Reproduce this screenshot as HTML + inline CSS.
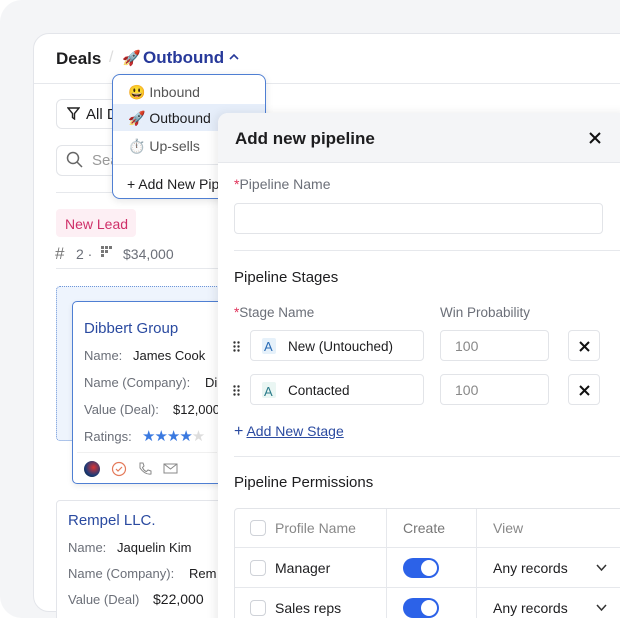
<!DOCTYPE html>
<html><head><meta charset="utf-8"><style>
*{box-sizing:border-box;margin:0;padding:0}
html,body{width:620px;height:618px;overflow:hidden}
body{background:#fff;font-family:"Liberation Sans",sans-serif;position:relative;color:#1d1d1f}
.abs{position:absolute}
.bg{left:0;top:0;width:620px;height:618px;background:#f4f5f7;border-radius:22px 0 0 22px}
.card{left:33px;top:33px;width:600px;height:579px;background:#fff;border:1px solid #e3e5ea;border-radius:16px 0 0 16px}
.t{position:absolute;white-space:nowrap;font-size:13px}
.g{color:#6b6f78}
.line{position:absolute;height:1px;background:#e6e8ec}
.box{position:absolute;border:1px solid #e2e4e8;border-radius:4px;background:#fff}
.chk{position:absolute;width:16px;height:16px;border:1px solid #cfd2d8;border-radius:4px;background:#fff}
.tog{position:absolute;width:36px;height:20px;border-radius:10px;background:#2c62e8}
.tog:after{content:"";position:absolute;right:2px;top:2px;width:16px;height:16px;border-radius:50%;background:#fff}
</style></head><body>
<div class="abs bg"></div>
<div class="abs card"></div>
<div class="t" style="left:56px;top:49px;font-size:17px;font-weight:bold">Deals</div>
<div class="t" style="left:109px;top:49px;font-size:16px;color:#ddd">/</div>
<div class="t" style="left:122px;top:49px;font-size:15px">🚀</div>
<div class="t" style="left:143px;top:48px;font-size:17px;font-weight:bold;color:#27399a">Outbound</div>
<svg class="abs" style="left:228px;top:52px" width="12" height="10"><path d="M2 7 L6 3 L10 7" fill="none" stroke="#27399a" stroke-width="1.6"/></svg>
<div class="line" style="left:34px;top:83px;width:586px"></div>
<div class="box" style="left:56px;top:99px;width:70px;height:30px;border-radius:6px"></div>
<svg class="abs" style="left:67px;top:107px" width="13" height="13"><path d="M1 1 H12 L7.5 6.5 V12 L5.5 10.5 V6.5 Z" fill="none" stroke="#222" stroke-width="1.4"/></svg>
<div class="t" style="left:86px;top:106px;font-size:15px">All D</div>
<div class="box" style="left:56px;top:145px;width:70px;height:31px;border-radius:6px"></div>
<svg class="abs" style="left:66px;top:151px" width="18" height="18"><circle cx="7" cy="7" r="5.5" fill="none" stroke="#666" stroke-width="1.5"/><path d="M11 11 L16 16" stroke="#666" stroke-width="1.5"/></svg>
<div class="t g" style="left:92px;top:152px;font-size:15px;color:#999">Sea</div>
<div class="line" style="left:56px;top:192px;width:170px"></div>
<div class="abs" style="left:56px;top:209px;width:80px;height:28px;background:#fdeff4;border-radius:4px"></div>
<div class="t" style="left:65px;top:216px;color:#cf2f68;font-size:14px">New Lead</div>
<div class="t g" style="left:55px;top:244px;font-size:17px;color:#777">#</div>
<div class="t g" style="left:76px;top:246px;font-size:14px">2 ·</div>
<svg class="abs" style="left:101px;top:246px" width="12" height="12" fill="#777"><rect x="0" y="0" width="3" height="3"/><rect x="4" y="0" width="3" height="3"/><rect x="8" y="0" width="3" height="3"/><rect x="0" y="4" width="3" height="3"/><rect x="4" y="4" width="3" height="3"/><rect x="0" y="8" width="3" height="3"/></svg>
<div class="t g" style="left:123px;top:246px;font-size:14px">$34,000</div>
<div class="line" style="left:56px;top:268px;width:170px"></div>
<div class="abs" style="left:56px;top:286px;width:170px;height:155px;background:#eef4fd;border:1px dotted #6d95d8;border-radius:4px"></div>
<div class="abs" style="left:72px;top:301px;width:160px;height:183px;background:#fff;border:1.5px solid #4f7fd3;border-radius:5px;box-shadow:0 2px 6px rgba(0,0,0,.08)"></div>
<div class="t" style="left:84px;top:320px;font-size:15px;color:#2a4aa0">Dibbert Group</div>
<div class="t g" style="left:84px;top:348px">Name:</div><div class="t" style="left:133px;top:348px">James Cook</div>
<div class="t g" style="left:84px;top:375px">Name (Company):</div><div class="t" style="left:205px;top:375px">Di</div>
<div class="t g" style="left:84px;top:402px">Value (Deal):</div><div class="t" style="left:173px;top:402px">$12,000</div>
<div class="t g" style="left:84px;top:429px">Ratings:</div>
<div class="t" style="left:142px;top:427px;color:#3a79e0;font-size:15px;letter-spacing:-1px">★★★★<span style="color:#ddd">★</span></div>
<div class="line" style="left:77px;top:452px;width:140px;background:#f0f0f0"></div>
<div class="abs" style="left:84px;top:461px;width:16px;height:16px;border-radius:50%;background:radial-gradient(circle at 60% 40%,#d33 0,#1a3b78 60%,#111 100%)"></div>
<svg class="abs" style="left:111px;top:461px" width="16" height="16"><circle cx="8" cy="8" r="6.5" fill="none" stroke="#e47a5a" stroke-width="1.2"/><path d="M5 8 L7 10 L11 6" fill="none" stroke="#e47a5a" stroke-width="1.2"/></svg>
<svg class="abs" style="left:137px;top:461px" width="16" height="16"><path d="M3 2 L6 2 L7 5 L5.5 6.5 Q7 10 9.5 10.5 L11 9 L14 10 L14 13 Q8 14 3 7 Z" fill="none" stroke="#888" stroke-width="1"/></svg>
<svg class="abs" style="left:163px;top:462px" width="15" height="13"><rect x="1" y="2" width="13" height="9" fill="none" stroke="#888" stroke-width="1"/><path d="M1 2 L7.5 7 L14 2" fill="none" stroke="#888" stroke-width="1"/></svg>
<div class="abs" style="left:56px;top:500px;width:170px;height:130px;background:#fff;border:1px solid #e3e5ea;border-radius:4px"></div>
<div class="t" style="left:68px;top:512px;font-size:15px;color:#2a4aa0">Rempel LLC.</div>
<div class="t g" style="left:68px;top:540px">Name:</div><div class="t" style="left:117px;top:540px">Jaquelin Kim</div>
<div class="t g" style="left:68px;top:566px">Name (Company):</div><div class="t" style="left:189px;top:566px">Rem</div>
<div class="t g" style="left:68px;top:592px">Value (Deal)</div><div class="t" style="left:153px;top:591px;font-size:14px">$22,000</div>

<!-- dropdown -->
<div class="abs" style="left:112px;top:74px;width:154px;height:125px;background:#fff;border:1.5px solid #4f7fd3;border-radius:8px;box-shadow:0 2px 8px rgba(0,0,0,.1);overflow:hidden">
<div class="abs" style="left:0;top:29px;width:154px;height:27px;background:#e6eefa"></div>
<div class="line" style="left:0;top:89px;width:154px"></div>
</div>
<div class="t" style="left:128px;top:84px;font-size:14px">😃 <span style="color:#555">Inbound</span></div>
<div class="t" style="left:128px;top:110px;font-size:14px">🚀 <span>Outbound</span></div>
<div class="t" style="left:128px;top:138px;font-size:14px">⏱️ <span style="color:#555">Up-sells</span></div>
<div class="t" style="left:127px;top:176px;font-size:14px">+ Add New Pipeline</div>

<!-- panel -->
<div class="abs" style="left:218px;top:113px;width:410px;height:520px;background:#fff;border-radius:10px 0 0 0;box-shadow:-3px 0 10px rgba(0,0,0,.08);overflow:hidden">
<div class="abs" style="left:0;top:0;width:410px;height:50px;background:#f4f5f7;border-bottom:1px solid #e6e8ec"></div>
</div>
<div class="t" style="left:235px;top:129px;font-size:17px;font-weight:bold">Add new pipeline</div>
<svg class="abs" style="left:589px;top:132px" width="12" height="12"><path d="M1 1 L11 11 M11 1 L1 11" stroke="#111" stroke-width="2"/></svg>
<div class="t g" style="left:234px;top:176px;font-size:14px"><span style="color:#e0325a">*</span>Pipeline Name</div>
<div class="box" style="left:234px;top:203px;width:369px;height:31px"></div>
<div class="line" style="left:234px;top:250px;width:386px"></div>
<div class="t" style="left:234px;top:269px;font-size:15px">Pipeline Stages</div>
<div class="t g" style="left:234px;top:305px;font-size:13.5px"><span style="color:#e0325a">*</span>Stage Name</div>
<div class="t g" style="left:440px;top:305px;font-size:13.5px">Win Probability</div>
<svg class="abs" style="left:233px;top:341px" width="8" height="12" fill="#333"><circle cx="1.5" cy="1.5" r="1.2"/><circle cx="5.5" cy="1.5" r="1.2"/><circle cx="1.5" cy="5.5" r="1.2"/><circle cx="5.5" cy="5.5" r="1.2"/><circle cx="1.5" cy="9.5" r="1.2"/><circle cx="5.5" cy="9.5" r="1.2"/></svg>
<div class="box" style="left:250px;top:330px;width:174px;height:31px"></div>
<div class="abs" style="left:262px;top:338px;width:14px;height:16px;background:#e6f1fa;border-radius:2px"></div>
<div class="t" style="left:264px;top:339px;color:#2a6bb5;font-size:13px">A</div>
<div class="t" style="left:288px;top:339px;font-size:13.5px">New (Untouched)</div>
<div class="box" style="left:440px;top:330px;width:109px;height:31px"></div>
<div class="t g" style="left:455px;top:338px;font-size:14px;color:#888">100</div>
<div class="box" style="left:568px;top:330px;width:32px;height:31px"></div>
<svg class="abs" style="left:579px;top:341px" width="11" height="11"><path d="M1 1 L10 10 M10 1 L1 10" stroke="#111" stroke-width="2"/></svg>
<svg class="abs" style="left:233px;top:385px" width="8" height="12" fill="#333"><circle cx="1.5" cy="1.5" r="1.2"/><circle cx="5.5" cy="1.5" r="1.2"/><circle cx="1.5" cy="5.5" r="1.2"/><circle cx="5.5" cy="5.5" r="1.2"/><circle cx="1.5" cy="9.5" r="1.2"/><circle cx="5.5" cy="9.5" r="1.2"/></svg>
<div class="box" style="left:250px;top:374px;width:174px;height:31px"></div>
<div class="abs" style="left:262px;top:382px;width:14px;height:16px;background:#eaf6f3;border-radius:2px"></div>
<div class="t" style="left:264px;top:384px;color:#2a7b8a;font-size:13px">A</div>
<div class="t" style="left:288px;top:383px;font-size:13.5px">Contacted</div>
<div class="box" style="left:440px;top:374px;width:109px;height:31px"></div>
<div class="t g" style="left:455px;top:382px;font-size:14px;color:#888">100</div>
<div class="box" style="left:568px;top:374px;width:32px;height:31px"></div>
<svg class="abs" style="left:579px;top:385px" width="11" height="11"><path d="M1 1 L10 10 M10 1 L1 10" stroke="#111" stroke-width="2"/></svg>
<div class="t" style="left:234px;top:423px;color:#2a4aa0;font-size:14px"><span style="font-size:16px">+</span> <span style="text-decoration:underline">Add New Stage</span></div>
<div class="line" style="left:234px;top:456px;width:386px"></div>
<div class="t" style="left:234px;top:474px;font-size:15px">Pipeline Permissions</div>
<div class="abs" style="left:234px;top:508px;width:400px;height:120px;border:1px solid #e2e4e8;border-radius:4px"></div>
<div class="line" style="left:235px;top:547px;width:385px"></div>
<div class="line" style="left:235px;top:587px;width:385px"></div>
<div class="abs" style="left:386px;top:509px;width:1px;height:110px;background:#e6e8ec"></div>
<div class="abs" style="left:476px;top:509px;width:1px;height:110px;background:#e6e8ec"></div>
<div class="chk" style="left:250px;top:520px"></div>
<div class="t g" style="left:275px;top:520px;font-size:14px;color:#888">Profile Name</div>
<div class="t g" style="left:403px;top:520px;font-size:14px;color:#777">Create</div>
<div class="t g" style="left:493px;top:520px;font-size:14px;color:#888">View</div>
<div class="chk" style="left:250px;top:560px"></div>
<div class="t" style="left:275px;top:560px;font-size:14px">Manager</div>
<div class="tog" style="left:403px;top:558px"></div>
<div class="t" style="left:493px;top:560px;font-size:14px">Any records</div>
<svg class="abs" style="left:596px;top:564px" width="11" height="8"><path d="M1 1 L5.5 6 L10 1" fill="none" stroke="#333" stroke-width="1.5"/></svg>
<div class="chk" style="left:250px;top:600px"></div>
<div class="t" style="left:275px;top:600px;font-size:14px">Sales reps</div>
<div class="tog" style="left:403px;top:598px"></div>
<div class="t" style="left:493px;top:600px;font-size:14px">Any records</div>
<svg class="abs" style="left:596px;top:604px" width="11" height="8"><path d="M1 1 L5.5 6 L10 1" fill="none" stroke="#333" stroke-width="1.5"/></svg>
</body></html>
